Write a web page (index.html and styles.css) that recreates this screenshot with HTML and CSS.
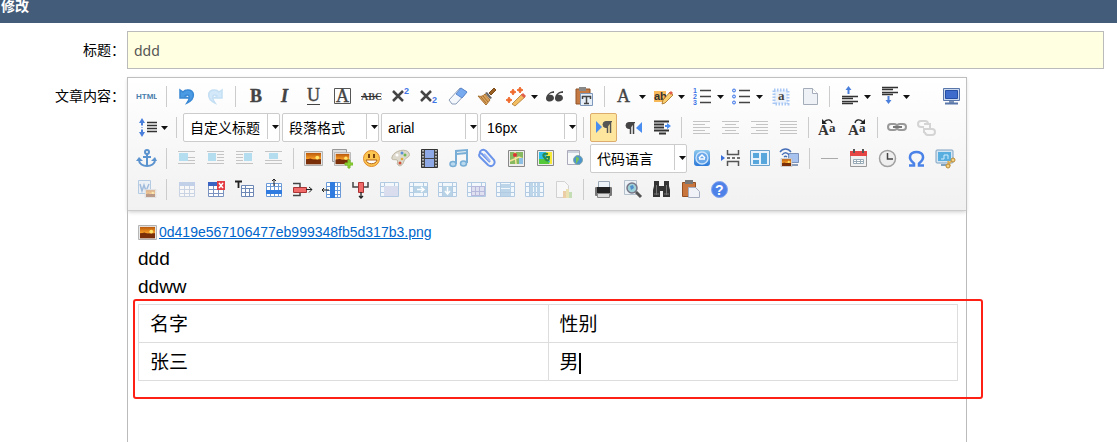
FILE: index.html
```html
<!DOCTYPE html>
<html lang="zh-CN">

<head>
	<meta charset="UTF-8">
	<title>修改</title>
	<link rel="stylesheet" href="styles.css">
</head>

<body>
	<!-- shared shapes -->
	<svg class="defs" width="0" height="0">
		<defs>
			<linearGradient id="sunset" x1="0" y1="0" x2="0" y2="1">
				<stop offset="0" stop-color="#b8580c" />
				<stop offset=".5" stop-color="#f59a25" />
				<stop offset=".65" stop-color="#6b2a0a" />
				<stop offset="1" stop-color="#8a3a08" />
			</linearGradient>
			<linearGradient id="blue" x1="0" y1="0" x2="0" y2="1">
				<stop offset="0" stop-color="#8cc8ee" />
				<stop offset="1" stop-color="#2b78d8" />
			</linearGradient>
		</defs>
		<symbol id="photo" viewBox="0 0 20 16">
			<path d="M.5.5h19v15H.5z" fill="#eee" stroke="#aaa" />
			<path d="M2 2h16v12H2z" fill="url(#sunset)" />
			<path d="M2 9l5-1 4 2 7-1v5H2z" fill="#7a2f08" />
			<circle cx="14" cy="7" r="2" fill="#ffe46b" />
		</symbol>
		<symbol id="down" viewBox="0 0 7 4">
			<path d="M0 0h7L3.500 4z" fill="#111" />
		</symbol>
		<symbol id="cells" viewBox="0 0 21 21">
			<path d="M1.500 3.500h18v14h-18zM5.500 3.500v14M15.500 3.500v14M1.500 7.500h18M1.500 13.500h18" fill="#f3f8fc" stroke="#b3cbe2" />
		</symbol>
	</svg>

	<div class="title-bar">修改</div>

	<form class="form">
		<div class="form-row">
			<label for="title">标题：</label>
			<input type="text" id="title" value="ddd">
		</div>
		<div class="form-row form-row-editor">
			<label for="content">文章内容：</label>
			<div class="editor">
				<div class="toolbar">
					<div class="toolbar-row">
						<button type="button" title="源代码"><svg viewBox="0 0 21 21"><text x="0" y="13" class="t-html">HTML</text></svg></button>
						<span class="sep"></span>
						<button type="button" title="撤销"><svg viewBox="0 0 21 21"><path d="M4 4v8h8l-3-2c4-3 6 1 2 7 9-4 8-14 0-13-2 0-3 1-4 2z" fill="#4a9ae4" stroke="#3a88d4" stroke-width="1.500" /></svg></button>
						<button type="button" title="重做"><svg viewBox="0 0 21 21"><path d="M17 4v8H9l3-2c-4-3-6 1-2 7-9-4-8-14 0-13 2 0 3 1 4 2z" fill="#d3e8f8" stroke="#c4dff4" stroke-width="1.500" /></svg></button>
						<span class="sep"></span>
						<button type="button" title="加粗"><svg viewBox="0 0 21 21"><text x="5" y="16" class="t-serif bold">B</text></svg></button>
						<button type="button" title="斜体"><svg viewBox="0 0 21 21"><text x="7" y="16" class="t-serif bold italic">I</text></svg></button>
						<button type="button" title="下划线"><svg viewBox="0 0 21 21"><text x="4" y="15" class="t-serif">U</text><path d="M4 18.500h13" stroke="#444" /></svg></button>
						<button type="button" title="字符边框"><svg viewBox="0 0 21 21"><path d="M2.500 2.500h16v15h-16z" fill="none" stroke="#555" /><text x="4" y="16" class="t-serif">A</text></svg></button>
						<button type="button" title="删除线"><svg viewBox="0 0 21 21"><text x="0" y="14" class="t-abc">ABC</text><path d="M0 10.500h20" stroke="#333" /></svg></button>
						<button type="button" title="上标"><svg viewBox="0 0 21 21"><path d="M3 5l10 10M13 5L3 15" stroke="#444" stroke-width="2.500" /><text x="14" y="8" class="t-script">2</text></svg></button>
						<button type="button" title="下标"><svg viewBox="0 0 21 21"><path d="M2 5l10 10M12 5L2 15" stroke="#444" stroke-width="2.500" /><text x="13" y="17" class="t-script">2</text></svg></button>
						<button type="button" title="清除格式"><svg viewBox="0 0 21 21"><path d="M1 14L12 2l7 4L8 18H4z" fill="#f4f7fb" stroke="#8a9cb8" /><path d="M8 8l5-6 6 4-5 6z" fill="#78aaf0" stroke="#5c88cc" /></svg></button>
						<button type="button" title="格式刷"><svg viewBox="0 0 21 21"><path d="M12 7l5-5 2 2-5 5z" fill="#9a6024" stroke="#7d4b19" /><path d="M10 6l5 6-2 1-5-6z" fill="#666" /><path d="M8 8l5 6-4 5-8-9c3 1 5 0 7-2z" fill="#d9a25c" stroke="#a8702f" /><path d="M4 11l5 6M6 10l5 6" stroke="#a8702f" /></svg></button>
						<button type="button" title="自动排版"><svg viewBox="0 0 21 21"><path d="M6 18l10-10 3 3L9 20z" fill="#f3bd62" stroke="#a66a20" stroke-width=".7" /><path d="M15 9l2-2 3 3-2 2z" fill="#e25c4a" /><path d="M7 3l1 2 2 1-2 1-1 2-1-2-2-1 2-1zM14 1l1 2 2 1-2 1-1 2-1-2-2-1 2-1zM3 11l1 2 2 1-2 1-1 2-1-2-2-1 2-1z" fill="#f06a2c" stroke="#f06a2c" /></svg></button>
						<button type="button" class="drop"><svg><use href="#down" /></svg></button>
						<button type="button" title="引用"><svg viewBox="0 0 21 21"><path d="M9 5C4 6 1 9 1 13c1 4 8 3 8-1 0-3-3-4-5-3 1-2 3-2 5-2zM18 5c-6 1-8 4-8 8 1 4 8 3 8-1 0-3-3-4-5-3 1-2 3-2 5-2z" fill="#444" /></svg></button>
						<button type="button" title="纯文本粘贴"><svg viewBox="0 0 21 21"><path d="M2 3h14v15H2z" fill="#c57a44" stroke="#8f5226" /><path d="M5 1h7v4H5z" fill="#888" /><path d="M6.500 7.500h12v12h-12z" fill="#e6eef8" stroke="#7d98ba" /><path d="M8 10.500h9M12.500 10v8M10 17.500h5M8.500 10v3M16.500 10v3" stroke="#444" stroke-width="1.500" /></svg></button>
						<span class="sep"></span>
						<button type="button" title="字体颜色"><svg viewBox="0 0 21 21"><text x="3" y="16" class="t-serif">A</text></svg></button>
						<button type="button" class="drop"><svg><use href="#down" /></svg></button>
						<button type="button" title="背景色"><svg viewBox="0 0 21 21"><path d="M1 5h12v11H1z" fill="#f8b95a" /><text x="1" y="14" class="t-ab">ab</text><path d="M9 18l1-4 7-8 3 3-8 8z" fill="#f8d070" stroke="#a56c20" stroke-width=".8" /><path d="M16 7l2-2 2 2-2 2z" fill="#e25c4a" /></svg></button>
						<button type="button" class="drop"><svg><use href="#down" /></svg></button>
						<button type="button" title="有序列表"><svg viewBox="0 0 21 21"><path d="M8 4.500h11M8 10.500h11M8 16.500h11" stroke="#444" stroke-width="1.300" /><text x="1" y="7" class="t-num">1</text><text x="1" y="13" class="t-num">2</text><text x="1" y="19" class="t-num">3</text></svg></button>
						<button type="button" class="drop"><svg><use href="#down" /></svg></button>
						<button type="button" title="无序列表"><svg viewBox="0 0 21 21"><path d="M8 4.500h11M8 10.500h11M8 16.500h11" stroke="#444" stroke-width="1.300" /><g fill="#cfe0ff" stroke="#3d74e6"><circle cx="3" cy="4.500" r="1.500" /><circle cx="3" cy="10.500" r="1.500" /><circle cx="3" cy="16.500" r="1.500" /></g></svg></button>
						<button type="button" class="drop"><svg><use href="#down" /></svg></button>
						<button type="button" title="全选"><svg viewBox="0 0 21 21"><path d="M4 4h14v14H4z" fill="#e9f1fd" stroke="#a9c8f4" stroke-width="3" stroke-dasharray="1.500 1.500" /><path d="M6 6h10v10H6z" fill="#eef3fa" /><text x="8" y="14" class="t-sel">a</text></svg></button>
						<button type="button" title="清空文档"><svg viewBox="0 0 21 21"><path d="M4.500 2.500h9l5 5v11h-14z" fill="#eef2f7" stroke="#a3acb8" /><path d="M13.500 2.500v5h5" fill="#fff" stroke="#a3acb8" /></svg></button>
						<span class="sep"></span>
						<button type="button" title="段前距"><svg viewBox="0 0 21 21"><path d="M3 10.500h16M3 12.500h11M3 15.500h16M3 17.500h11" stroke="#333" stroke-width="1.300" /><path d="M9.500 0l3 4h-2v4h-2V4h-2z" fill="#4a7fdc" /></svg></button>
						<button type="button" class="drop"><svg><use href="#down" /></svg></button>
						<button type="button" title="段后距"><svg viewBox="0 0 21 21"><path d="M4 1.500h16M4 3.500h11M4 6.500h16M4 8.500h11" stroke="#333" stroke-width="1.300" /><path d="M10.500 18l3-4h-2v-4h-2v4h-2z" fill="#4a7fdc" /></svg></button>
						<button type="button" class="drop"><svg><use href="#down" /></svg></button>
						<button type="button" title="全屏" class="right"><svg viewBox="0 0 21 21"><path d="M2.500 2.500h16v12h-16z" fill="#cbd9ee" stroke="#5976ab" /><path d="M4.500 4.500h12v8h-12z" fill="#3d6ccc" stroke="#244fa5" /><path d="M8 15h5v2H8z" fill="#7d92b5" /><path d="M4 17.500h13" stroke="#5976ab" stroke-width="2" /></svg></button>
					</div>

					<div class="toolbar-row">
						<button type="button" title="行间距"><svg viewBox="0 0 21 21"><path d="M11 5.500h10M11 8.500h10M11 11.500h10M11 14.500h10" stroke="#333" stroke-width="1.300" /><path d="M6 1l3 5H7v2H5V6H3zM6 20l3-5H7v-2H5v2H3z" fill="#4a7fdc" /><path d="M6 8v6" stroke="#4a7fdc" stroke-dasharray="1 1" /></svg></button>
						<button type="button" class="drop"><svg><use href="#down" /></svg></button>
						<span class="sep"></span>
						<span class="combo"><select aria-label="自定义标题"><option>自定义标题</option></select><span class="combo-arrow"><svg><use href="#down" /></svg></span></span>
						<span class="combo"><select aria-label="段落格式"><option>段落格式</option></select><span class="combo-arrow"><svg><use href="#down" /></svg></span></span>
						<span class="combo"><select aria-label="字体"><option>arial</option></select><span class="combo-arrow"><svg><use href="#down" /></svg></span></span>
						<span class="combo"><select aria-label="字号"><option>16px</option></select><span class="combo-arrow"><svg><use href="#down" /></svg></span></span>
						<span class="sep"></span>
						<button type="button" title="从左向右输入" class="active"><svg viewBox="0 0 21 21"><path d="M3 4l6 6-6 6z" fill="#4a8df0" /><path d="M19 4.500h-6a3 3 0 0 0 0 6h1" fill="#555" stroke="#555" /><path d="M14.500 4v12M17.500 4v12" stroke="#555" stroke-width="1.500" /></svg></button>
						<button type="button" title="从右向左输入"><svg viewBox="0 0 21 21"><path d="M20 5l-6 6 6 5z" fill="#4a8df0" /><path d="M13 5.500H7a3 3 0 0 0 0 6h1" fill="#444" stroke="#444" /><path d="M8.500 5v12M11.500 5v12" stroke="#444" stroke-width="1.500" /></svg></button>
						<button type="button" title="首行缩进"><svg viewBox="0 0 21 21"><path d="M3 4.500h15M3 7.500h10M3 10.500h10M3 13.500h15M8 16.500h7" stroke="#333" stroke-width="1.800" /><path d="M14 8h2V6l4 3-4 3v-2h-2z" fill="#4a8df0" /></svg></button>
						<span class="sep"></span>
						<button type="button" title="居左对齐"><svg viewBox="0 0 21 21" class="align"><path d="M2 4.500h17M2 7.500h12M2 10.500h17M2 13.500h12M2 16.500h17" /></svg></button>
						<button type="button" title="居中对齐"><svg viewBox="0 0 21 21" class="align"><path d="M2 4.500h17M5 7.500h11M2 10.500h17M5 13.500h11M2 16.500h17" /></svg></button>
						<button type="button" title="居右对齐"><svg viewBox="0 0 21 21" class="align"><path d="M2 4.500h17M7 7.500h12M2 10.500h17M7 13.500h12M2 16.500h17" /></svg></button>
						<button type="button" title="两端对齐"><svg viewBox="0 0 21 21" class="align"><path d="M2 4.500h17M2 7.500h17M2 10.500h17M2 13.500h17M2 16.500h17" /></svg></button>
						<span class="sep"></span>
						<button type="button" title="字母大写"><svg viewBox="0 0 21 21"><text x="0" y="18" class="t-case">A</text><text x="11" y="15" class="t-case small">a</text><path d="M14 6c-1-4-5-4-8-1" fill="none" stroke="#222" stroke-width="1.300" /><path d="M4 2v5h5z" fill="#222" /></svg></button>
						<button type="button" title="字母小写"><svg viewBox="0 0 21 21"><text x="1" y="18" class="t-case">A</text><text x="12" y="15" class="t-case small">a</text><path d="M8 6c1-4 5-4 8-1" fill="none" stroke="#222" stroke-width="1.300" /><path d="M18 2v5h-5z" fill="#222" /></svg></button>
						<span class="sep"></span>
						<button type="button" title="超链接"><svg viewBox="0 0 21 21"><g fill="none" stroke="#999" stroke-width="2"><rect x="1" y="7" width="9" height="6" rx="3" /><rect x="10" y="7" width="9" height="6" rx="3" /></g><path d="M6 10h9" stroke="#777" stroke-width="2" /></svg></button>
						<button type="button" title="取消链接"><svg viewBox="0 0 21 21"><g fill="none" stroke="#d4d4d4" stroke-width="2"><path d="M8 10H5a3 3 0 0 1 0-6h4a3 3 0 0 1 3 3" /><path d="M14 12h2a3 3 0 0 1 0 6h-4a3 3 0 0 1-3-3" /><path d="M8 7h6v5H8v4" /></g></svg></button>
					</div>

					<div class="toolbar-row">
						<button type="button" title="锚点"><svg viewBox="0 0 21 21"><g fill="none" stroke="#5b93cf" stroke-width="2"><circle cx="11" cy="4" r="2" /><path d="M11 6v12M7 9h8M3 12c0 8 16 8 16 0" /></g><path d="M0 13l3-4 4 4zM15 13l4-4 2 4z" fill="#5b93cf" /></svg></button>
						<span class="sep"></span>
						<button type="button" title="左浮动"><svg viewBox="0 0 21 21" class="float"><path d="M2 3.500h17M12 9.500h7M12 12.500h7M2 15.500h17" /><path d="M3 5h9v8H3z" /></svg></button>
						<button type="button" title="左环绕"><svg viewBox="0 0 21 21" class="float"><path d="M2 3.500h17M12 6.500h7M12 9.500h7M12 12.500h7M2 15.500h17" /><path d="M3 5h8v8H3z" /></svg></button>
						<button type="button" title="右环绕"><svg viewBox="0 0 21 21" class="float"><path d="M2 3.500h17M2 6.500h7M2 9.500h7M2 12.500h7M2 15.500h17" /><path d="M10 5h8v8h-8z" /></svg></button>
						<button type="button" title="居中"><svg viewBox="0 0 21 21" class="float"><path d="M2 3.500h17M2 12.500h17M2 15.500h17" /><path d="M6 5h9v6H6z" /></svg></button>
						<span class="sep"></span>
						<button type="button" title="图片"><svg viewBox="0 0 21 21"><use href="#photo" x="1" y="3" width="19" height="15" /></svg></button>
						<button type="button" title="多图上传"><svg viewBox="0 0 21 21"><path d="M.5 1.500h14v12H.5z" fill="#ddd" stroke="#999" /><use href="#photo" x="2" y="4" width="17" height="14" /><path d="M16 12h2v3h3v2h-3v3h-2v-3h-3v-2h3z" fill="#8fd633" stroke="#78bc28" /></svg></button>
						<button type="button" title="表情"><svg viewBox="0 0 21 21"><circle cx="10.500" cy="10.500" r="8" fill="#fbc550" stroke="#e08a2c" /><path d="M8 6v4M13 6v4" stroke="#7b4310" stroke-width="2" /><path d="M5 12h11c-1 5-10 5-11 0z" fill="#fff" stroke="#b3641a" /></svg></button>
						<button type="button" title="涂鸦"><svg viewBox="0 0 21 21"><path d="M2 9C4 2 17 0 19 5s-4 4-5 8-4 6-6 4 1-4-1-5-6 1-5-3z" fill="#ddd9cc" stroke="#bbb49f" /><circle cx="7" cy="7" r="1.500" fill="#fff" /><circle cx="12" cy="5" r="1.500" fill="#5a90d8" /><circle cx="15" cy="7" r="1.500" fill="#70b850" /><circle cx="10" cy="15" r="1.500" fill="#d05038" /><circle cx="12" cy="11" r="1.300" fill="#e0a838" /></svg></button>
						<button type="button" title="视频"><svg viewBox="0 0 21 21"><path d="M2.500 1.500h16v18h-16z" fill="#444" stroke="#333" /><path d="M6 2h9v8H6zM6 11h9v8H6z" fill="#8fa9e6" /><path d="M4 2v17M17 2v17" stroke="#ddd" stroke-width="1.500" stroke-dasharray="1.500 1.500" /></svg></button>
						<button type="button" title="音乐"><svg viewBox="0 0 21 21"><path d="M8 16V3l11-1v13" fill="none" stroke="#78aed6" stroke-width="2" /><path d="M8 6l11-1" stroke="#78aed6" stroke-width="2" /><ellipse cx="5" cy="16" rx="3" ry="2.500" fill="#b9d9ef" stroke="#78aed6" stroke-width="1.500" /><ellipse cx="15.500" cy="15.500" rx="3" ry="2.500" fill="#b9d9ef" stroke="#78aed6" stroke-width="1.500" /></svg></button>
						<button type="button" title="附件"><svg viewBox="0 0 21 21"><path d="M13 14L5 6c-2-2-4 1-2 3l8 8c4 3 8-1 6-5L9 3C6 0 2 3 3 6" fill="none" stroke="#6a93ea" stroke-width="2" /><path d="M7 6l6 7" stroke="#9db8f4" stroke-width="2" /></svg></button>
						<button type="button" title="Google地图"><svg viewBox="0 0 21 21"><path d="M2.500 2.500h16v16h-16z" fill="#eee" stroke="#888" /><path d="M4 4h13v12H4z" fill="#87b960" /><path d="M4 13l9-4 4 2M9 4l1 12" stroke="#f7e49b" stroke-width="1.500" fill="none" /><path d="M13 10h4v6h-4z" fill="#8ec0e6" /><circle cx="9" cy="7" r="2" fill="#d33" /></svg></button>
						<button type="button" title="百度地图"><svg viewBox="0 0 21 21"><path d="M2.500 2.500h16v15h-16z" fill="#eee" stroke="#888" /><path d="M4 4h13v12H4z" fill="#2dbbe8" /><path d="M4 11h7l4 5H4z" fill="#54c93a" /><path d="M11 4h6v12h-3l1-3-3-2z" fill="#f6e93a" /><path d="M13 6c-5-1-6 1-3 4 1 3 4 4 4-1h-3" fill="none" stroke="#2a8a4a" stroke-width="2" /></svg></button>
						<button type="button" title="插入Iframe"><svg viewBox="0 0 21 21"><path d="M3.500 2.500h12v14h-12z" fill="#f7f8fa" stroke="#aab" /><path d="M4 3h11v2H4z" fill="#ccd3dd" /><circle cx="14" cy="12" r="4.500" fill="#4a94cf" stroke="#8aa" /><path d="M12 9c3 0 4 2 2 4s0 3-2 2z" fill="#79c258" /></svg></button>
						<span class="combo"><select aria-label="代码语言"><option>代码语言</option></select><span class="combo-arrow"><svg><use href="#down" /></svg></span></span>
						<button type="button" title="百度应用"><svg viewBox="0 0 21 21"><rect x="2" y="2" width="16" height="16" rx="3" fill="url(#blue)" /><circle cx="10" cy="10" r="6" fill="#6aa8ea" stroke="#cfe5fb" stroke-width="1.300" /><path d="M7 10l3-3 3 3M7 11h6" stroke="#fff" stroke-width="1.500" fill="none" /></svg></button>
						<button type="button" title="分页"><svg viewBox="0 0 21 21"><path d="M0 7l4 3-4 3z" fill="#3a70dc" /><path d="M6.500 2v4.500h11V2M6.500 18v-4.500h11V18" fill="#f5f5f5" stroke="#555" stroke-width="1.500" /><path d="M6 10h13" stroke="#444" stroke-width="1.500" stroke-dasharray="3 2" /></svg></button>
						<button type="button" title="模板"><svg viewBox="0 0 21 21"><path d="M.5 2.500h19v15H.5z" fill="#e8f2fa" stroke="#6ca3cd" /><path d="M3 5h6v5H3zM3 12h6v4H3zM11 5h6v11h-6z" fill="#58a7dc" /></svg></button>
						<button type="button" title="背景"><svg viewBox="0 0 21 21"><path d="M9.500 5.500h10v9h-10z" fill="#a7c2ee" stroke="#7b93bb" /><path d="M11 17h8" stroke="#8a9cb8" stroke-width="2" /><path d="M1 4c3-4 8-4 11 0M3 7c2-3 5-3 7 0M5 9c1-1 2-1 3 0" fill="none" stroke="#4870b8" stroke-width="1.300" /><use href="#photo" x="1" y="10" width="13" height="9" /></svg></button>
						<span class="sep"></span>
						<button type="button" title="分隔线"><svg viewBox="0 0 21 21"><path d="M2 10.500h17" stroke="#aaa" /></svg></button>
						<button type="button" title="日期"><svg viewBox="0 0 21 21"><path d="M2.500 3.500h16v15h-16z" fill="#f2f2f2" stroke="#999" /><path d="M2 3h17v5H2z" fill="#e54545" /><path d="M6 1v4M15 1v4" stroke="#555" stroke-width="2" /><path d="M5.500 11.500h10v4h-10zM8.500 11v5M12.500 11v5M5 13.500h11" fill="#fff" stroke="#9aabb8" /></svg></button>
						<button type="button" title="时间"><svg viewBox="0 0 21 21"><circle cx="10.500" cy="10.500" r="8" fill="#eee" stroke="#a0a0a0" stroke-width="1.500" /><path d="M10.500 5v6H16" fill="none" stroke="#444" stroke-width="1.500" /></svg></button>
						<button type="button" title="特殊字符"><svg viewBox="0 0 21 21"><path d="M3 17.500h5v-2C1 10 4 4 10.500 4S20 10 13 15.500v2h5" fill="none" stroke="#4a82e8" stroke-width="2.500" /></svg></button>
						<button type="button" title="截图"><svg viewBox="0 0 21 21"><rect x="1" y="2" width="17" height="13" rx="1" fill="#d5e5f2" stroke="#7ea2c0" /><path d="M3 4h13v9H3z" fill="#58aede" /><path d="M6 11h3V7h4v4" fill="none" stroke="#d0edff" /><path d="M6 17h5" stroke="#7ea2c0" stroke-width="2" /><path d="M11 18l7-6M15 18l-2-5" stroke="#dcae58" stroke-width="2" /><circle cx="18" cy="12" r="2" fill="#f3d284" stroke="#b98a38" /><circle cx="13" cy="18" r="2" fill="#f3d284" stroke="#b98a38" /></svg></button>
					</div>

					<div class="toolbar-row">
						<button type="button" title="Word图片转存"><svg viewBox="0 0 21 21" class="faded"><path d="M2.500 1.500h12v13h-12z" fill="#e4eef8" stroke="#6b9bd0" /><path d="M4 5l2 7 2-6 2 6 3-7" fill="none" stroke="#3b78c0" stroke-width="1.500" /><use href="#photo" x="8" y="10" width="13" height="9" /></svg></button>
						<span class="sep"></span>
						<button type="button" title="插入表格"><svg viewBox="0 0 21 21" class="faded"><path d="M3.500 3.500h15v14h-15zM3.500 10.500h15M3.500 14.500h15M8.500 3.500v14M13.500 3.500v14" fill="#fff" stroke="#9aaed0" /><path d="M3 3h16v4H3z" fill="#87a5db" /></svg></button>
						<button type="button" title="删除表格"><svg viewBox="0 0 21 21"><path d="M3.500 4.500h15v13h-15zM3.500 10.500h15M3.500 14.500h15M8.500 4.500v13M13.500 4.500v13" fill="#fff" stroke="#7a92c0" /><path d="M3 3h16v4H3z" fill="#3b63c2" /><path d="M12 2h8v9h-8z" fill="#e33e45" /><path d="M14 4l4 5M18 4l-4 5" stroke="#fff" stroke-width="1.500" /></svg></button>
						<button type="button" title="表格前插入段落"><svg viewBox="0 0 21 21"><path d="M7.500 6.500h12v11h-12zM7.500 9.500h12M7.500 13.500h12M11.500 6.500v11M15.500 9.500v8" fill="#fff" stroke="#6e88b5" /><path d="M1 2.500h7M4.500 2v7" stroke="#222" stroke-width="1.800" /></svg></button>
						<button type="button" title="前插入行"><svg viewBox="0 0 21 21"><path d="M3.500 4.500h15v13h-15zM7.500 4.500v13M11.500 4.500v13M15.500 4.500v13M3.500 7.500h15" fill="#fff" stroke="#6a9ad8" /><path d="M3 11h16v4H3z" fill="#2f7be0" /><path d="M11 7V0M9 2l2-2 2 2" fill="none" stroke="#222" /></svg></button>
						<button type="button" title="删除行"><svg viewBox="0 0 21 21"><path d="M1 4.500h7v5M1 16.500h7v-4" fill="none" stroke="#444" stroke-width="1.500" /><path d="M1.500 8.500h13v5h-13z" fill="#f06a6a" stroke="#a33" /><path d="M14 10.500h6M17 8l3 2.500-3 3" fill="none" stroke="#222" /></svg></button>
						<button type="button" title="前插入列"><svg viewBox="0 0 21 21"><path d="M5.500 3.500h14v15h-14zM5.500 7.500h14M5.500 11.500h14M5.500 15.500h14M16.500 3.500v15" fill="#fff" stroke="#6a9ad8" /><path d="M9 3h5v16H9z" fill="#2f7be0" /><path d="M8 11H1M3 9l-2 2 2 2" fill="none" stroke="#222" /></svg></button>
						<button type="button" title="删除列"><svg viewBox="0 0 21 21"><path d="M3 3v5h5M18 3v5h-5" fill="none" stroke="#444" stroke-width="1.500" /><path d="M8.500 3.500h5v10h-5z" fill="#f06a6a" stroke="#a33" /><path d="M11 13v6M9 17l2 2 2-2" fill="none" stroke="#222" stroke-width="1.300" /></svg></button>
						<button type="button" title="合并多个单元格"><svg viewBox="0 0 21 21"><use href="#cells" /><path d="M5 7h14v10H5z" fill="#d9ddee" /></svg></button>
						<button type="button" title="右合并单元格"><svg viewBox="0 0 21 21"><use href="#cells" /><path d="M6 7h13v7H6z" fill="#b9d3e6" /><path d="M9 10.500h7M13 8l3 2.500-3 2.500" fill="none" stroke="#fff" stroke-width="1.500" /></svg></button>
						<button type="button" title="下合并单元格"><svg viewBox="0 0 21 21"><use href="#cells" /><path d="M6 7h9v10H6z" fill="#b9d3e6" /><path d="M10.500 8v7M8 12l2.500 3 2.500-3" fill="none" stroke="#fff" stroke-width="1.500" /></svg></button>
						<button type="button" title="完全拆分单元格"><svg viewBox="0 0 21 21"><use href="#cells" /><path d="M5.500 7.500h13v9h-13zM5.500 12.500h13M9.500 7.500v9M13.500 7.500v9" fill="#dfe0f0" stroke="#b6b9dc" /></svg></button>
						<button type="button" title="拆分成行"><svg viewBox="0 0 21 21"><use href="#cells" /><path d="M6 5h10v4H6zM6 10h10v3H6zM6 14h10v3H6z" fill="#bdd5e9" /></svg></button>
						<button type="button" title="拆分成列"><svg viewBox="0 0 21 21"><use href="#cells" /><path d="M6 4h3v13H6zM10 4h2v13h-2zM13 4h3v13h-3z" fill="#bdd5e9" /></svg></button>
						<button type="button" title="图表"><svg viewBox="0 0 21 21" class="faded"><path d="M3.500 2.500h8l4 4v12h-12z" fill="#fff" stroke="#aaa" /><path d="M10 12h3v7h-3z" fill="#e3a24b" /><path d="M13 10h3v9h-3z" fill="#e3cf6a" /><path d="M16 13h3v6h-3z" fill="#8fc46a" /></svg></button>
						<span class="sep"></span>
						<button type="button" title="打印"><svg viewBox="0 0 21 21"><path d="M5.500 2.500h11v7h-11z" fill="#eef3f8" stroke="#9aa7b5" /><rect x="2" y="8" width="17" height="9" rx="1" fill="#777" /><path d="M4 8h13v6H4z" fill="#222" /><path d="M4.500 14.500h12v4h-12z" fill="#ddd" stroke="#888" /></svg></button>
						<button type="button" title="预览"><svg viewBox="0 0 21 21"><path d="M2.500 1.500h12v14h-12z" fill="#edf2f7" stroke="#b4c0cc" /><circle cx="10" cy="9" r="5" fill="#9fd0d8" stroke="#778" stroke-width="1.500" /><path d="M8 7l3-1 1 3-3 2z" fill="#4f8fca" /><path d="M14 13l5 5" stroke="#555" stroke-width="3" /></svg></button>
						<button type="button" title="查询替换"><svg viewBox="0 0 21 21"><path d="M3 2h5v5h5V2h5v5l1 4v7h-7v-6H9v6H2v-7l1-4z" fill="#333" /><path d="M5.500 6v10M15.500 6v10M3 15h5M13 15h5" stroke="#777" /></svg></button>
						<button type="button" title="从草稿箱加载"><svg viewBox="0 0 21 21"><path d="M2.500 3.500h13v14h-13z" fill="#c9763e" stroke="#945022" /><path d="M5 1h8v4H5z" fill="#777" /><path d="M8.500 8.500h7l4 4v6h-11z" fill="#f0f2f8" stroke="#a5adc0" /></svg></button>
						<button type="button" title="帮助"><svg viewBox="0 0 21 21"><circle cx="10.500" cy="10.500" r="8" fill="#4f82e8" stroke="#82a4ee" /><text x="6" y="16" class="t-help">?</text></svg></button>
					</div>
				</div>

				<div class="editor-body" id="content" contenteditable="true" spellcheck="false">
					<p class="attachment"><svg class="attachment-icon"><use href="#photo" /></svg><a href="#">0d419e567106477eb999348fb5d317b3.png</a></p>
					<p>ddd</p>
					<p>ddww</p>
					<div class="table-wrap">
						<table>
							<tr>
								<td>名字</td>
								<td>性别</td>
							</tr>
							<tr>
								<td>张三</td>
								<td>男<span class="caret"></span></td>
							</tr>
						</table>
						<div class="highlight"></div>
					</div>
				</div>
			</div>
		</div>
	</form>
</body>

</html>
```
FILE: styles.css
```css
body {
	margin: 0;
	min-height: 100vh;
	display: flex;
	flex-direction: column;
	background-color: #fff;
	color: #000;
	font-family: "Liberation Sans", "Noto Sans CJK SC", sans-serif;
	font-size: 14px;
}

.defs {
	position: absolute;
}

.title-bar {
	height: 23px;
	padding-left: 1px;
	box-sizing: border-box;
	background-color: #425c7a;
	color: #fff;
	font-weight: bold;
	line-height: 12px;
}

.form {
	flex: 1;
	display: flex;
	flex-direction: column;
	gap: 8px;
	padding: 8px 13px 0 0;
}

.form-row {
	display: flex;
}

.form-row-editor {
	flex: 1;
}

label {
	width: 127px;
	flex-shrink: 0;
	padding-right: 2px;
	box-sizing: border-box;
	text-align: right;
	line-height: 38px;
}

input[type="text"] {
	flex: 1;
	height: 38px;
	padding: 0 6px;
	box-sizing: border-box;
	border: 1px solid #bbb;
	background-color: #ffffe1;
	color: #555;
	font-family: "Noto Sans", sans-serif;
	font-size: 14px;
}

/* editor */
.editor {
	flex: 1;
	max-width: 840px;
	box-sizing: border-box;
	display: flex;
	flex-direction: column;
	border: 1px solid #bbb;
	border-bottom: none;
}

.toolbar {
	padding: 3px 0 5px 4px;
	border-bottom: 1px solid #ccc;
	background: linear-gradient(#fff, #f1f1f1);
	box-shadow: 0 1px 4px #ccc;
}

.toolbar-row {
	display: flex;
	align-items: center;
	height: 31px;
}

button {
	flex-shrink: 0;
	display: flex;
	align-items: center;
	justify-content: center;
	width: 29px;
	height: 31px;
	padding: 0;
	border: none;
	background: none;
	cursor: pointer;
}

button svg {
	width: 21px;
	height: 21px;
}

button.active {
	width: 27px;
	height: 29px;
	margin: 0 1px;
	box-sizing: border-box;
	border: 1px solid #dcac6c;
	border-radius: 2px;
	background-color: #ffe69f;
}

button.drop {
	width: 10px;
	justify-content: flex-start;
}

button.drop svg,
.combo-arrow svg {
	width: 7px;
	height: 4px;
}

button.right {
	margin-left: auto;
}

.sep {
	flex-shrink: 0;
	width: 1px;
	height: 21px;
	margin: 0 5px;
	background-color: #ccc;
}

.combo {
	flex-shrink: 0;
	display: grid;
	grid-template-columns: 1fr 12px;
	width: 97px;
	height: 29px;
	margin: 0 1px;
	box-sizing: border-box;
	border: 1px solid #ccc;
	border-radius: 2px;
	background-color: #fff;
}

.combo select {
	grid-area: 1 / 1 / 2 / 3;
	appearance: none;
	padding: 0 0 0 6px;
	border: none;
	background: none;
	color: #000;
	font-family: inherit;
	font-size: 14px;
}

.combo-arrow {
	grid-area: 1 / 2 / 2 / 3;
	display: flex;
	align-items: center;
	justify-content: flex-end;
	height: 25px;
	border-left: 1px solid #ccc;
	pointer-events: none;
}

/* icon lettering */
.t-html {
	fill: #4a7fae;
	font: bold 8px "Liberation Sans", sans-serif;
}

.t-serif {
	fill: #444;
	font: 18px "Liberation Serif", serif;
	stroke: #444;
	stroke-width: 0.4;
}

.bold {
	font-weight: bold;
}

.italic {
	font-style: italic;
}

.t-abc {
	fill: #444;
	font: bold 10px "Liberation Serif", serif;
}

.t-script {
	fill: #3d74e6;
	font: bold 9px "Liberation Sans", sans-serif;
}

.t-ab {
	fill: #333;
	font: bold 11px "Liberation Sans", sans-serif;
}

.t-num {
	fill: #3d74e6;
	font: bold 7px "Liberation Sans", sans-serif;
}

.t-sel {
	fill: #444;
	font: bold 13px "Liberation Serif", serif;
}

.t-case {
	fill: #333;
	font: bold 15px "Liberation Serif", serif;
}

.t-case.small {
	font-size: 13px;
}

.t-help {
	fill: #fff;
	font: bold 14px "Liberation Sans", sans-serif;
}

.align {
	stroke: #c4c4c4;
}

.float {
	stroke: #c4c4c4;
}

.float path + path {
	fill: #b4def0;
	stroke: none;
}

.faded {
	opacity: 0.45;
}

/* document */
.editor-body {
	flex: 1;
	padding: 8px 8px 20px 10px;
	outline: none;
	font-size: 19px;
}

.editor-body p {
	margin: 0;
	line-height: 28px;
}

.editor-body .attachment {
	display: flex;
	align-items: center;
	gap: 2px;
	font-size: 14px;
	line-height: 26px;
}

.attachment-icon {
	width: 19px;
	height: 15px;
}

.attachment a {
	color: #0066cc;
}

.table-wrap {
	position: relative;
	margin-top: 3px;
}

table {
	width: 100%;
	table-layout: fixed;
	border-collapse: collapse;
}

td {
	height: 37px;
	padding: 2px 11px 0;
	box-sizing: border-box;
	border: 1px solid #ddd;
	line-height: 28px;
}

tr {
	height: 38px;
}

.caret {
	display: inline-block;
	width: 2px;
	height: 21px;
	background-color: #000;
	vertical-align: middle;
}

/* red frame drawn over the table */
.highlight {
	position: absolute;
	top: -5px;
	right: -25px;
	bottom: -18px;
	left: -5px;
	border: 2px solid #ff2015;
	border-radius: 3px;
	pointer-events: none;
}
```
